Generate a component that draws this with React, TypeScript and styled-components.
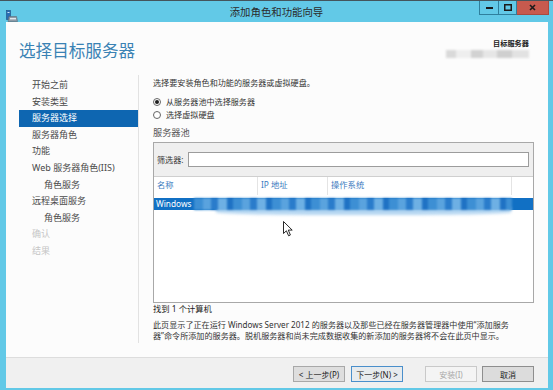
import React from 'react'
import styled, { createGlobalStyle } from 'styled-components'

const GlobalStyle = createGlobalStyle`
  html, body {
    margin: 0;
    padding: 0;
    background: #ffffff;
  }
  body {
    font-family: "Noto Sans", "Noto Sans CJK SC", sans-serif;
  }
`

const Frame = styled.div`
  width: 553px;
  height: 390px;
  box-sizing: border-box;
  background: #62c9e7;
  border-top: 1px solid #44555d;
  display: flex;
  flex-direction: column;
  overflow: hidden;
`

const TitleBar = styled.div`
  height: 21px;
  display: grid;
  grid-template-columns: 1fr auto 1fr;
  align-items: start;
`

const AppIcon = styled.div`
  padding: 4px 0 0 6px;
  height: 12px;
`

const Caption = styled.div`
  font-family: "Noto Sans CJK SC", sans-serif;
  font-size: 10.4px;
  line-height: 22px;
  color: #2b2b2b;
`

const Controls = styled.div`
  justify-self: end;
  display: flex;
  margin-right: 4px;
`

const CtrlButton = styled.div<{ $w: number; $close?: boolean }>`
  width: ${p => p.$w}px;
  height: 14px;
  box-sizing: border-box;
  display: flex;
  align-items: center;
  justify-content: center;
  background: ${p => (p.$close ? '#c75a4e' : '#62c9e7')};
  border: 1px solid ${p => (p.$close ? '#a94a40' : '#2f7f9d')};
  border-top: none;
  & + & {
    border-left: none;
  }
`

const Client = styled.div`
  flex: 1;
  margin: 0 5px 2px 6px;
  background: #fcfcfc;
  display: flex;
  flex-direction: column;
  min-height: 0;
`

const Header = styled.div`
  height: 53px;
  flex-shrink: 0;
  display: flex;
  justify-content: space-between;
  align-items: flex-start;
  padding: 0 19px 0 13px;
`

const PageTitle = styled.h1`
  margin: 18px 0 0;
  font-family: "Noto Sans CJK SC", sans-serif;
  font-weight: 400;
  font-size: 16.6px;
  line-height: 20px;
  color: #3a82b4;
`

const Target = styled.div`
  margin-top: 17px;
  display: flex;
  flex-direction: column;
  align-items: flex-end;
`

const TargetLabel = styled.div`
  font-family: "Noto Sans CJK SC", sans-serif;
  font-size: 7.2px;
  font-weight: 700;
  line-height: 8px;
  color: #222;
`

const TargetBlur = styled.div`
  margin-top: 3px;
  width: 83px;
  height: 8px;
  background: linear-gradient(90deg, #d9d9d9 0 12%, #eeeeee 12% 30%, #d2d2d2 30% 45%, #e6e6e6 45% 62%, #cfcfcf 62% 80%, #e2e2e2 80%);
  filter: blur(1px);
`

const Body = styled.div`
  flex: 1;
  display: flex;
  min-height: 0;
`

const Nav = styled.nav`
  width: 133px;
  flex-shrink: 0;
  box-sizing: border-box;
  padding: 2px 0 0 13px;
  margin-bottom: 14px;
  border-right: 1px solid #e2e2e2;
`

const NavItem = styled.div<{ $active?: boolean; $disabled?: boolean; $indent?: boolean }>`
  height: 16.6px;
  line-height: 16.6px;
  padding-left: ${p => (p.$indent ? 25 : 13)}px;
  font-family: "Noto Sans", "Noto Sans CJK SC", sans-serif;
  font-size: 9px;
  white-space: nowrap;
  background: ${p => (p.$active ? '#0e66b1' : 'transparent')};
  color: ${p => (p.$active ? '#ffffff' : p.$disabled ? '#c6c6c6' : '#4a4a4a')};
`

const Content = styled.div`
  flex: 1;
  padding: 1px 14px 0 14px;
  display: flex;
  flex-direction: column;
  font-family: "Noto Sans", "Noto Sans CJK SC", sans-serif;
  color: #333;
`

const Intro = styled.div`
  font-size: 8.1px;
  line-height: 14px;
`

const RadioList = styled.div`
  margin-top: 6px;
`

const RadioRow = styled.div`
  height: 12.5px;
  line-height: 12.5px;
  display: flex;
  align-items: center;
  gap: 5px;
  font-size: 8.1px;
`

const Radio = styled.span<{ $checked?: boolean }>`
  width: 8px;
  height: 8px;
  box-sizing: border-box;
  border-radius: 50%;
  border: 1px solid #666;
  background: #fff;
  display: flex;
  align-items: center;
  justify-content: center;
  &::after {
    content: '';
    width: 4px;
    height: 4px;
    border-radius: 50%;
    background: ${p => (p.$checked ? '#1e1e1e' : 'transparent')};
  }
`

const PoolLabel = styled.div`
  font-size: 9.2px;
  line-height: 10px;
  color: #555;
  margin: 7px 0 4px;
`

const PoolBox = styled.div`
  height: 161px;
  box-sizing: border-box;
  border: 1px solid #a8a8a8;
  display: flex;
  flex-direction: column;
`

const FilterBar = styled.div`
  height: 34px;
  flex-shrink: 0;
  box-sizing: border-box;
  background: #efefef;
  border-bottom: 1px solid #cfcfcf;
  display: flex;
  align-items: center;
  padding: 0 4px 0 3px;
`

const FilterLabel = styled.span`
  width: 31px;
  font-size: 8.1px;
  color: #333;
  white-space: nowrap;
`

const FilterInput = styled.div`
  flex: 1;
  height: 15px;
  box-sizing: border-box;
  border: 1px solid #9c9c9c;
  background: #fff;
`

const Table = styled.div`
  flex: 1;
  position: relative;
  background: #fff;
`

const HeadRow = styled.div`
  display: grid;
  grid-template-columns: 104px 70px 184px 1fr;
  height: 18px;
`

const HeadCell = styled.div<{ $last?: boolean }>`
  box-sizing: border-box;
  padding-left: 3px;
  font-size: 8.3px;
  line-height: 16px;
  color: #3d7bc0;
  border-right: ${p => (p.$last ? 'none' : '1px solid #e4e4e4')};
  white-space: nowrap;
`

const SelectedRow = styled.div`
  position: relative;
  margin-top: 3px;
  height: 12px;
  background: #1170c4;
  color: #fff;
  font-size: 8.3px;
  line-height: 12px;
  padding-left: 2px;
`

const Redact = styled.div`
  position: absolute;
  left: 40px;
  top: 0;
  width: 318px;
  height: 12px;
  background: repeating-linear-gradient(90deg, #3d8fd4 0 9px, #5aa3de 9px 17px, #2a7ccb 17px 24px, #6eb0e4 24px 33px, #1f72c4 33px 39px);
  filter: blur(1.2px);
`

const Smear = styled.div`
  position: absolute;
  left: 62px;
  top: 10px;
  width: 295px;
  height: 7px;
  border-radius: 0 0 40% 40%;
  background: #b5d6f1;
  filter: blur(1.5px);
`

const Pointer = styled.svg`
  position: absolute;
  left: 129px;
  top: 44px;
`

const Found = styled.div`
  font-size: 8.3px;
  line-height: 9px;
  margin-top: 1px;
  color: #222;
`

const Note = styled.p`
  margin: 6px 0 0;
  font-size: 8.1px;
  line-height: 11px;
  color: #333;
  white-space: nowrap;
`

const Footer = styled.div`
  height: 31px;
  flex-shrink: 0;
  box-sizing: border-box;
  background: #f0f0f0;
  border-top: 1px solid #dddddd;
  display: flex;
  justify-content: flex-end;
  align-items: flex-start;
  padding: 8px 14px 0 0;
`

type Kind = 'normal' | 'focus' | 'disabled' | 'cancel'

const buttonColors: Record<Kind, { bg: string; border: string; color: string }> = {
  normal: { bg: '#dedede', border: '#a8a8a8', color: '#222' },
  focus: { bg: '#e7ebee', border: '#4a8fcb', color: '#222' },
  disabled: { bg: '#f4f4f4', border: '#c9c9c9', color: '#a8a8a8' },
  cancel: { bg: '#dcdcdc', border: '#8e8e8e', color: '#222' },
}

const Button = styled.div<{ $kind: Kind; $gap: number }>`
  width: 52px;
  height: 16px;
  box-sizing: border-box;
  margin-left: ${p => p.$gap}px;
  display: flex;
  align-items: center;
  justify-content: center;
  font-family: "Noto Sans", "Noto Sans CJK SC", sans-serif;
  font-size: 8px;
  white-space: nowrap;
  background: ${p => buttonColors[p.$kind].bg};
  border: 1px solid ${p => buttonColors[p.$kind].border};
  color: ${p => buttonColors[p.$kind].color};
`

const navItems = [
  { label: '开始之前' },
  { label: '安装类型' },
  { label: '服务器选择', active: true },
  { label: '服务器角色' },
  { label: '功能' },
  { label: 'Web 服务器角色(IIS)' },
  { label: '角色服务', indent: true },
  { label: '远程桌面服务' },
  { label: '角色服务', indent: true },
  { label: '确认', disabled: true },
  { label: '结果', disabled: true },
]

export default function App() {
  return (
    <>
      <GlobalStyle />
      <Frame>
        <TitleBar>
          <AppIcon>
            <svg width="12" height="12" viewBox="0 0 12 12">
              <rect x="0.5" y="0.5" width="4" height="9" fill="#2a6cb3" stroke="#1c4f86" strokeWidth="0.6" />
              <rect x="1.5" y="2" width="2" height="1" fill="#cfe6f7" />
              <path d="M3 6.5 L10.5 6.5 L11.5 11.5 L2 11.5 Z" fill="#8d9aa6" stroke="#5d6a75" strokeWidth="0.6" />
              <rect x="4" y="8" width="6" height="1.4" fill="#dfe6ec" />
            </svg>
          </AppIcon>
          <Caption>添加角色和功能向导</Caption>
          <Controls>
            <CtrlButton $w={20}>
              <svg width="7" height="3"><rect width="7" height="2" y="1" fill="#1b1b1b" /></svg>
            </CtrlButton>
            <CtrlButton $w={18}>
              <svg width="8" height="7"><rect x="0.75" y="0.75" width="6.5" height="5.5" fill="none" stroke="#1b1b1b" strokeWidth="1.5" /></svg>
            </CtrlButton>
            <CtrlButton $w={32} $close>
              <svg width="7" height="7"><path d="M1 1 L6 6 M6 1 L1 6" stroke="#1b1b1b" strokeWidth="1.6" /></svg>
            </CtrlButton>
          </Controls>
        </TitleBar>
        <Client>
          <Header>
            <PageTitle>选择目标服务器</PageTitle>
            <Target>
              <TargetLabel>目标服务器</TargetLabel>
              <TargetBlur />
            </Target>
          </Header>
          <Body>
            <Nav>
              {navItems.map((item, i) => (
                <NavItem key={i} $active={item.active} $disabled={item.disabled} $indent={item.indent}>
                  {item.label}
                </NavItem>
              ))}
            </Nav>
            <Content>
              <Intro>选择要安装角色和功能的服务器或虚拟硬盘。</Intro>
              <RadioList>
                <RadioRow>
                  <Radio $checked />
                  从服务器池中选择服务器
                </RadioRow>
                <RadioRow>
                  <Radio />
                  选择虚拟硬盘
                </RadioRow>
              </RadioList>
              <PoolLabel>服务器池</PoolLabel>
              <PoolBox>
                <FilterBar>
                  <FilterLabel>筛选器:</FilterLabel>
                  <FilterInput />
                </FilterBar>
                <Table>
                  <HeadRow>
                    <HeadCell>名称</HeadCell>
                    <HeadCell>IP 地址</HeadCell>
                    <HeadCell>操作系统</HeadCell>
                    <HeadCell $last />
                  </HeadRow>
                  <SelectedRow>
                    Windows
                    <Smear />
                    <Redact />
                  </SelectedRow>
                  <Pointer width="11" height="16" viewBox="0 0 11 16">
                    <path d="M0.5 0.5 L0.5 12.5 L3.4 9.8 L5.6 14.8 L7.4 14 L5.3 9.1 L9.2 9.1 Z" fill="#fff" stroke="#111" strokeWidth="0.9" strokeLinejoin="round" />
                  </Pointer>
                </Table>
              </PoolBox>
              <Found>找到 1 个计算机</Found>
              <Note>
                此页显示了正在运行 Windows Server 2012 的服务器以及那些已经在服务器管理器中使用“添加服务
                <br />
                器”命令所添加的服务器。脱机服务器和尚未完成数据收集的新添加的服务器将不会在此页中显示。
              </Note>
            </Content>
          </Body>
          <Footer>
            <Button $kind="normal" $gap={0}>&lt; 上一步(P)</Button>
            <Button $kind="focus" $gap={6}>下一步(N) &gt;</Button>
            <Button $kind="disabled" $gap={22}>安装(I)</Button>
            <Button $kind="cancel" $gap={5}>取消</Button>
          </Footer>
        </Client>
      </Frame>
    </>
  )
}
